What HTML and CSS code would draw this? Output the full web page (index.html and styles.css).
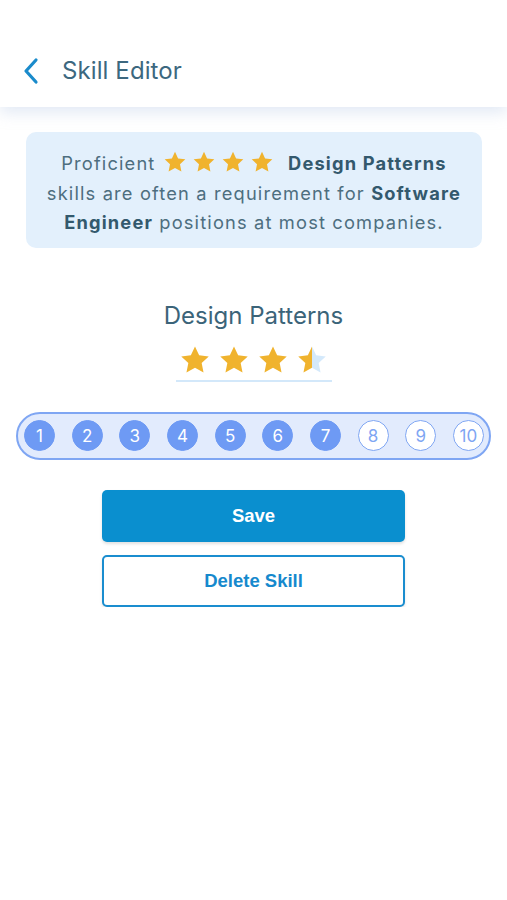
FILE: index.html
```html
<!DOCTYPE html>
<html>
<head>
<meta charset="utf-8">
<link rel="stylesheet" href="styles.css">
</head>
<body>
<header class="topbar">
  <svg class="back" width="18" height="28" viewBox="0 0 18 28"><path d="M14 3 L4 14 L14 25" fill="none" stroke="#1a8bcb" stroke-width="3.2" stroke-linecap="round" stroke-linejoin="round"/></svg>
  <h1 class="title">Skill Editor</h1>
</header>
<main class="content">
  <div class="info">
    <p>Proficient <span class="mini-stars"><svg viewBox="0 0 24 24"><path d="M12 1.8l3.1 6.6 7.2.9-5.3 5 1.4 7.1L12 17.9l-6.4 3.5L7 14.3l-5.3-5 7.2-.9z"/></svg><svg viewBox="0 0 24 24"><path d="M12 1.8l3.1 6.6 7.2.9-5.3 5 1.4 7.1L12 17.9l-6.4 3.5L7 14.3l-5.3-5 7.2-.9z"/></svg><svg viewBox="0 0 24 24"><path d="M12 1.8l3.1 6.6 7.2.9-5.3 5 1.4 7.1L12 17.9l-6.4 3.5L7 14.3l-5.3-5 7.2-.9z"/></svg><svg viewBox="0 0 24 24"><path d="M12 1.8l3.1 6.6 7.2.9-5.3 5 1.4 7.1L12 17.9l-6.4 3.5L7 14.3l-5.3-5 7.2-.9z"/></svg></span> <b>Design Patterns</b><br>skills are often a requirement for <b>Software</b><br><b>Engineer</b> positions at most companies.</p>
  </div>
  <h2 class="skill-name">Design Patterns</h2>
  <div class="rating">
    <svg viewBox="0 0 24 24"><path fill="#f0b32e" d="M12 1.8l3.1 6.6 7.2.9-5.3 5 1.4 7.1L12 17.9l-6.4 3.5L7 14.3l-5.3-5 7.2-.9z"/></svg>
    <svg viewBox="0 0 24 24"><path fill="#f0b32e" d="M12 1.8l3.1 6.6 7.2.9-5.3 5 1.4 7.1L12 17.9l-6.4 3.5L7 14.3l-5.3-5 7.2-.9z"/></svg>
    <svg viewBox="0 0 24 24"><path fill="#f0b32e" d="M12 1.8l3.1 6.6 7.2.9-5.3 5 1.4 7.1L12 17.9l-6.4 3.5L7 14.3l-5.3-5 7.2-.9z"/></svg>
    <svg viewBox="0 0 24 24"><defs><linearGradient id="half"><stop offset="50%" stop-color="#f0b32e"/><stop offset="50%" stop-color="#d4e9fb"/></linearGradient></defs><path fill="url(#half)" d="M12 1.8l3.1 6.6 7.2.9-5.3 5 1.4 7.1L12 17.9l-6.4 3.5L7 14.3l-5.3-5 7.2-.9z"/></svg>
  </div>
  <div class="scale">
    <span class="dot on">1</span>
    <span class="dot on">2</span>
    <span class="dot on">3</span>
    <span class="dot on">4</span>
    <span class="dot on">5</span>
    <span class="dot on">6</span>
    <span class="dot on">7</span>
    <span class="dot">8</span>
    <span class="dot">9</span>
    <span class="dot">10</span>
  </div>
  <div class="actions">
    <button class="btn primary">Save</button>
    <button class="btn outline">Delete Skill</button>
  </div>
</main>
</body>
</html>
```
FILE: styles.css
```css
* { box-sizing: border-box; }
html, body { margin: 0; padding: 0; background: #ffffff; }
body { width: 507px; font-family: "Inter", "Noto Sans", sans-serif; }

.topbar {
  height: 107px;
  display: flex;
  align-items: center;
  padding: 34px 0 0 22px;
  background: #fff;
  box-shadow: 0 6px 14px rgba(175, 195, 225, 0.35);
  position: relative;
  z-index: 1;
}
.back { display: block; }
.title {
  margin: 0 0 0 22px;
  font-weight: 400;
  font-size: 24px;
  color: #3c687f;
  letter-spacing: 0.1px;
}

.content { display: flex; flex-direction: column; align-items: center; }

.info {
  margin-top: 25px;
  width: 456px;
  margin-left: 1px;
  background: #e3f0fc;
  border-radius: 10px;
  padding: 17px 0 10px;
}
.info p {
  margin: 0;
  text-align: center;
  white-space: nowrap;
  font-size: 18.3px;
  line-height: 29.5px;
  letter-spacing: 1.15px;
  color: #4d6e7f;
}
.info b { color: #33596d; font-weight: 700; }
.mini-stars { display: inline-flex; gap: 5px; vertical-align: -4px; margin: 0 8px 0 1px; }
.mini-stars svg { width: 24px; height: 24px; fill: #f0b32e; }

.skill-name {
  margin: 53px 0 0;
  font-weight: 400;
  font-size: 24px;
  line-height: 30px;
  color: #3b6479;
}
.rating {
  margin-top: 13px;
  width: 156px;
  display: flex;
  gap: 7px;
  justify-content: center;
  padding-bottom: 4px;
  border-bottom: 2px solid #d3e8fa;
}
.rating svg { width: 32px; height: 32px; }

.scale {
  margin-top: 30px;
  width: 475px;
  height: 48px;
  border: 2px solid #7fa6f3;
  border-radius: 24px;
  background: #e2ebfd;
  display: flex;
  align-items: center;
  justify-content: space-between;
  padding: 0 5px 0 6px;
}
.dot {
  width: 31px;
  height: 31px;
  border-radius: 50%;
  display: flex;
  align-items: center;
  justify-content: center;
  font-size: 17px;
  background: #fff;
  border: 1.5px solid #7fa6f3;
  color: #7fa6f3;
}
.dot.on { background: #6e9af4; border-color: #6e9af4; color: #fff; }

.actions {
  margin-top: 30px;
  width: 303px;
  display: flex;
  flex-direction: column;
  gap: 13px;
}
.btn {
  height: 52px;
  border-radius: 5px;
  font-family: "Liberation Sans", Arial, sans-serif;
  font-weight: 700;
  font-size: 18.5px;
  cursor: pointer;
}
.primary { background: #0a8fcf; color: #fff; border: none; box-shadow: 0 2px 3px rgba(0,0,0,0.12); }
.outline { background: #fff; color: #1689cd; border: 2px solid #1a8dcf; box-shadow: 0 2px 3px rgba(0,0,0,0.1); }
```
